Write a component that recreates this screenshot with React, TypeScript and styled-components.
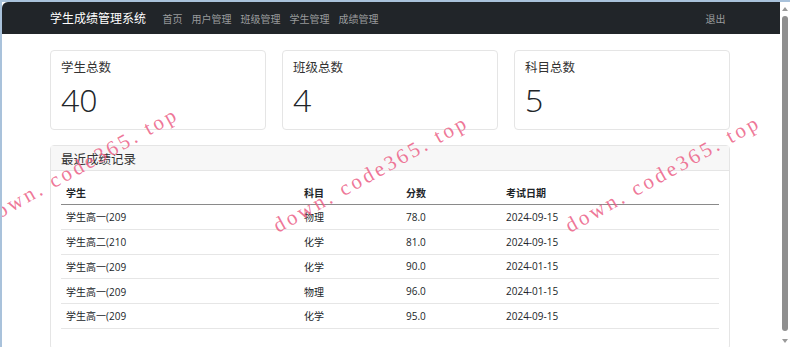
import styled, { createGlobalStyle } from "styled-components";

const GlobalStyle = createGlobalStyle`
  html, body {
    margin: 0;
    padding: 0;
    background: #ffffff;
  }
  body {
    font-family: "Open Sans", "Noto Sans CJK SC", sans-serif;
    color: #212529;
  }
`;

const Frame = styled.div`
  position: relative;
  width: 790px;
  height: 347px;
  box-sizing: border-box;
  border-left: 2px solid #a9c2db;
  border-top: 2px solid #a9c2db;
  display: flex;
  overflow: hidden;
  background: #ffffff;
`;

const Main = styled.div`
  flex: 1;
  min-width: 0;
  display: flex;
  flex-direction: column;
`;

const Navbar = styled.nav`
  height: 32px;
  flex-shrink: 0;
  background: #212529;
  border-top-left-radius: 6px;
  display: flex;
  align-items: center;
`;

const NavInner = styled.div`
  width: 680px;
  margin-left: 48px;
  display: flex;
  align-items: center;
`;

const Brand = styled.span`
  color: #ffffff;
  font-size: 12px;
  margin-right: 12px;
  white-space: nowrap;
`;

const NavLinks = styled.div`
  display: flex;
  flex: 1;
`;

const NavLink = styled.a`
  color: rgba(255, 255, 255, 0.55);
  font-size: 10px;
  padding: 0 4.5px;
  text-decoration: none;
  white-space: nowrap;
`;

const Container = styled.div`
  width: 680px;
  margin: 16px 0 0 48px;
  display: flex;
  flex-direction: column;
  gap: 15px;
`;

const StatsRow = styled.div`
  display: grid;
  grid-template-columns: repeat(3, 1fr);
  gap: 16px;
`;

const Card = styled.div`
  border: 1px solid #e5e5e5;
  border-radius: 4px;
  background: #ffffff;
`;

const StatBody = styled.div`
  height: 78px;
  box-sizing: border-box;
  padding: 8px 10px;
`;

const StatTitle = styled.div`
  font-size: 12.5px;
  color: #333333;
  line-height: 18px;
`;

const StatValue = styled.div`
  font-size: 32px;
  font-weight: 300;
  line-height: 46px;
  color: #212529;
`;

const CardHeader = styled.div`
  height: 24px;
  background: #f7f7f7;
  border-bottom: 1px solid #e5e5e5;
  padding: 0 10px;
  display: flex;
  align-items: center;
  font-size: 12.5px;
  color: #333333;
`;

const CardBody = styled.div`
  padding: 9px 10px 20px;
`;

const Table = styled.table`
  width: 100%;
  border-collapse: collapse;
  font-size: 10px;
  table-layout: fixed;
`;

const Th = styled.th<{ $w?: number }>`
  text-align: left;
  font-weight: 700;
  height: 24px;
  padding: 0 5px;
  border-bottom: 1px solid #8a8a8a;
  width: ${(p) => (p.$w ? `${p.$w}px` : "auto")};
`;

const Td = styled.td`
  height: 23.75px;
  padding: 0 5px;
  border-bottom: 1px solid #e6e6e6;
  color: #212529;
  white-space: nowrap;
  overflow: hidden;
`;

const Scrollbar = styled.div`
  width: 10px;
  flex-shrink: 0;
  background: #ffffff;
  display: flex;
  flex-direction: column;
  align-items: center;
  padding: 5px 0 4px;
  box-sizing: border-box;
`;

const Arrow = styled.div<{ $down?: boolean }>`
  width: 0;
  height: 0;
  border-left: 3px solid transparent;
  border-right: 3px solid transparent;
  ${(p) =>
    p.$down
      ? "border-top: 4px solid #9a9a9a;"
      : "border-bottom: 4px solid #9a9a9a;"}
`;

const Thumb = styled.div`
  width: 6px;
  flex: 1;
  margin: 5px 0 8px;
  background: #8f8f8f;
  border-radius: 3px;
`;

const WatermarkLayer = styled.div`
  position: absolute;
  inset: 0;
  pointer-events: none;
`;

const Watermark = styled.span`
  position: absolute;
  width: max-content;
  font-family: "Liberation Serif", serif;
  font-size: 21px;
  line-height: 21px;
  letter-spacing: 3px;
  color: rgba(236, 96, 134, 0.85);
  white-space: nowrap;
  transform-origin: 0 80%;
  transform: rotate(-29deg);
`;

const stats = [
  { title: "学生总数", value: 40 },
  { title: "班级总数", value: 4 },
  { title: "科目总数", value: 5 },
];

const records = [
  { student: "学生高一(209", subject: "物理", score: "78.0", date: "2024-09-15" },
  { student: "学生高二(210", subject: "化学", score: "81.0", date: "2024-09-15" },
  { student: "学生高一(209", subject: "化学", score: "90.0", date: "2024-01-15" },
  { student: "学生高一(209", subject: "物理", score: "96.0", date: "2024-01-15" },
  { student: "学生高一(209", subject: "化学", score: "95.0", date: "2024-09-15" },
];

const marks = [
  { left: -14, top: 206 },
  { left: 276, top: 214 },
  { left: 568, top: 214 },
];

const App = () => {
  return (
    <>
      <GlobalStyle />
      <Frame>
        <Main>
          <Navbar>
            <NavInner>
              <Brand>学生成绩管理系统</Brand>
              <NavLinks>
                <NavLink>首页</NavLink>
                <NavLink>用户管理</NavLink>
                <NavLink>班级管理</NavLink>
                <NavLink>学生管理</NavLink>
                <NavLink>成绩管理</NavLink>
              </NavLinks>
              <NavLink>退出</NavLink>
            </NavInner>
          </Navbar>
          <Container>
            <StatsRow>
              {stats.map((s) => (
                <Card key={s.title}>
                  <StatBody>
                    <StatTitle>{s.title}</StatTitle>
                    <StatValue>{s.value}</StatValue>
                  </StatBody>
                </Card>
              ))}
            </StatsRow>
            <Card>
              <CardHeader>最近成绩记录</CardHeader>
              <CardBody>
                <Table>
                  <thead>
                    <tr>
                      <Th $w={228}>学生</Th>
                      <Th $w={92}>科目</Th>
                      <Th $w={90}>分数</Th>
                      <Th>考试日期</Th>
                    </tr>
                  </thead>
                  <tbody>
                    {records.map((r, i) => (
                      <tr key={i}>
                        <Td>{r.student}</Td>
                        <Td>{r.subject}</Td>
                        <Td>{r.score}</Td>
                        <Td>{r.date}</Td>
                      </tr>
                    ))}
                  </tbody>
                </Table>
              </CardBody>
            </Card>
          </Container>
        </Main>
        <Scrollbar>
          <Arrow />
          <Thumb />
          <Arrow $down />
        </Scrollbar>
        <WatermarkLayer>
          {marks.map((m, i) => (
            <Watermark key={i} style={{ left: m.left, top: m.top }}>
              down. code365. top
            </Watermark>
          ))}
        </WatermarkLayer>
      </Frame>
    </>
  );
};

export default App;
